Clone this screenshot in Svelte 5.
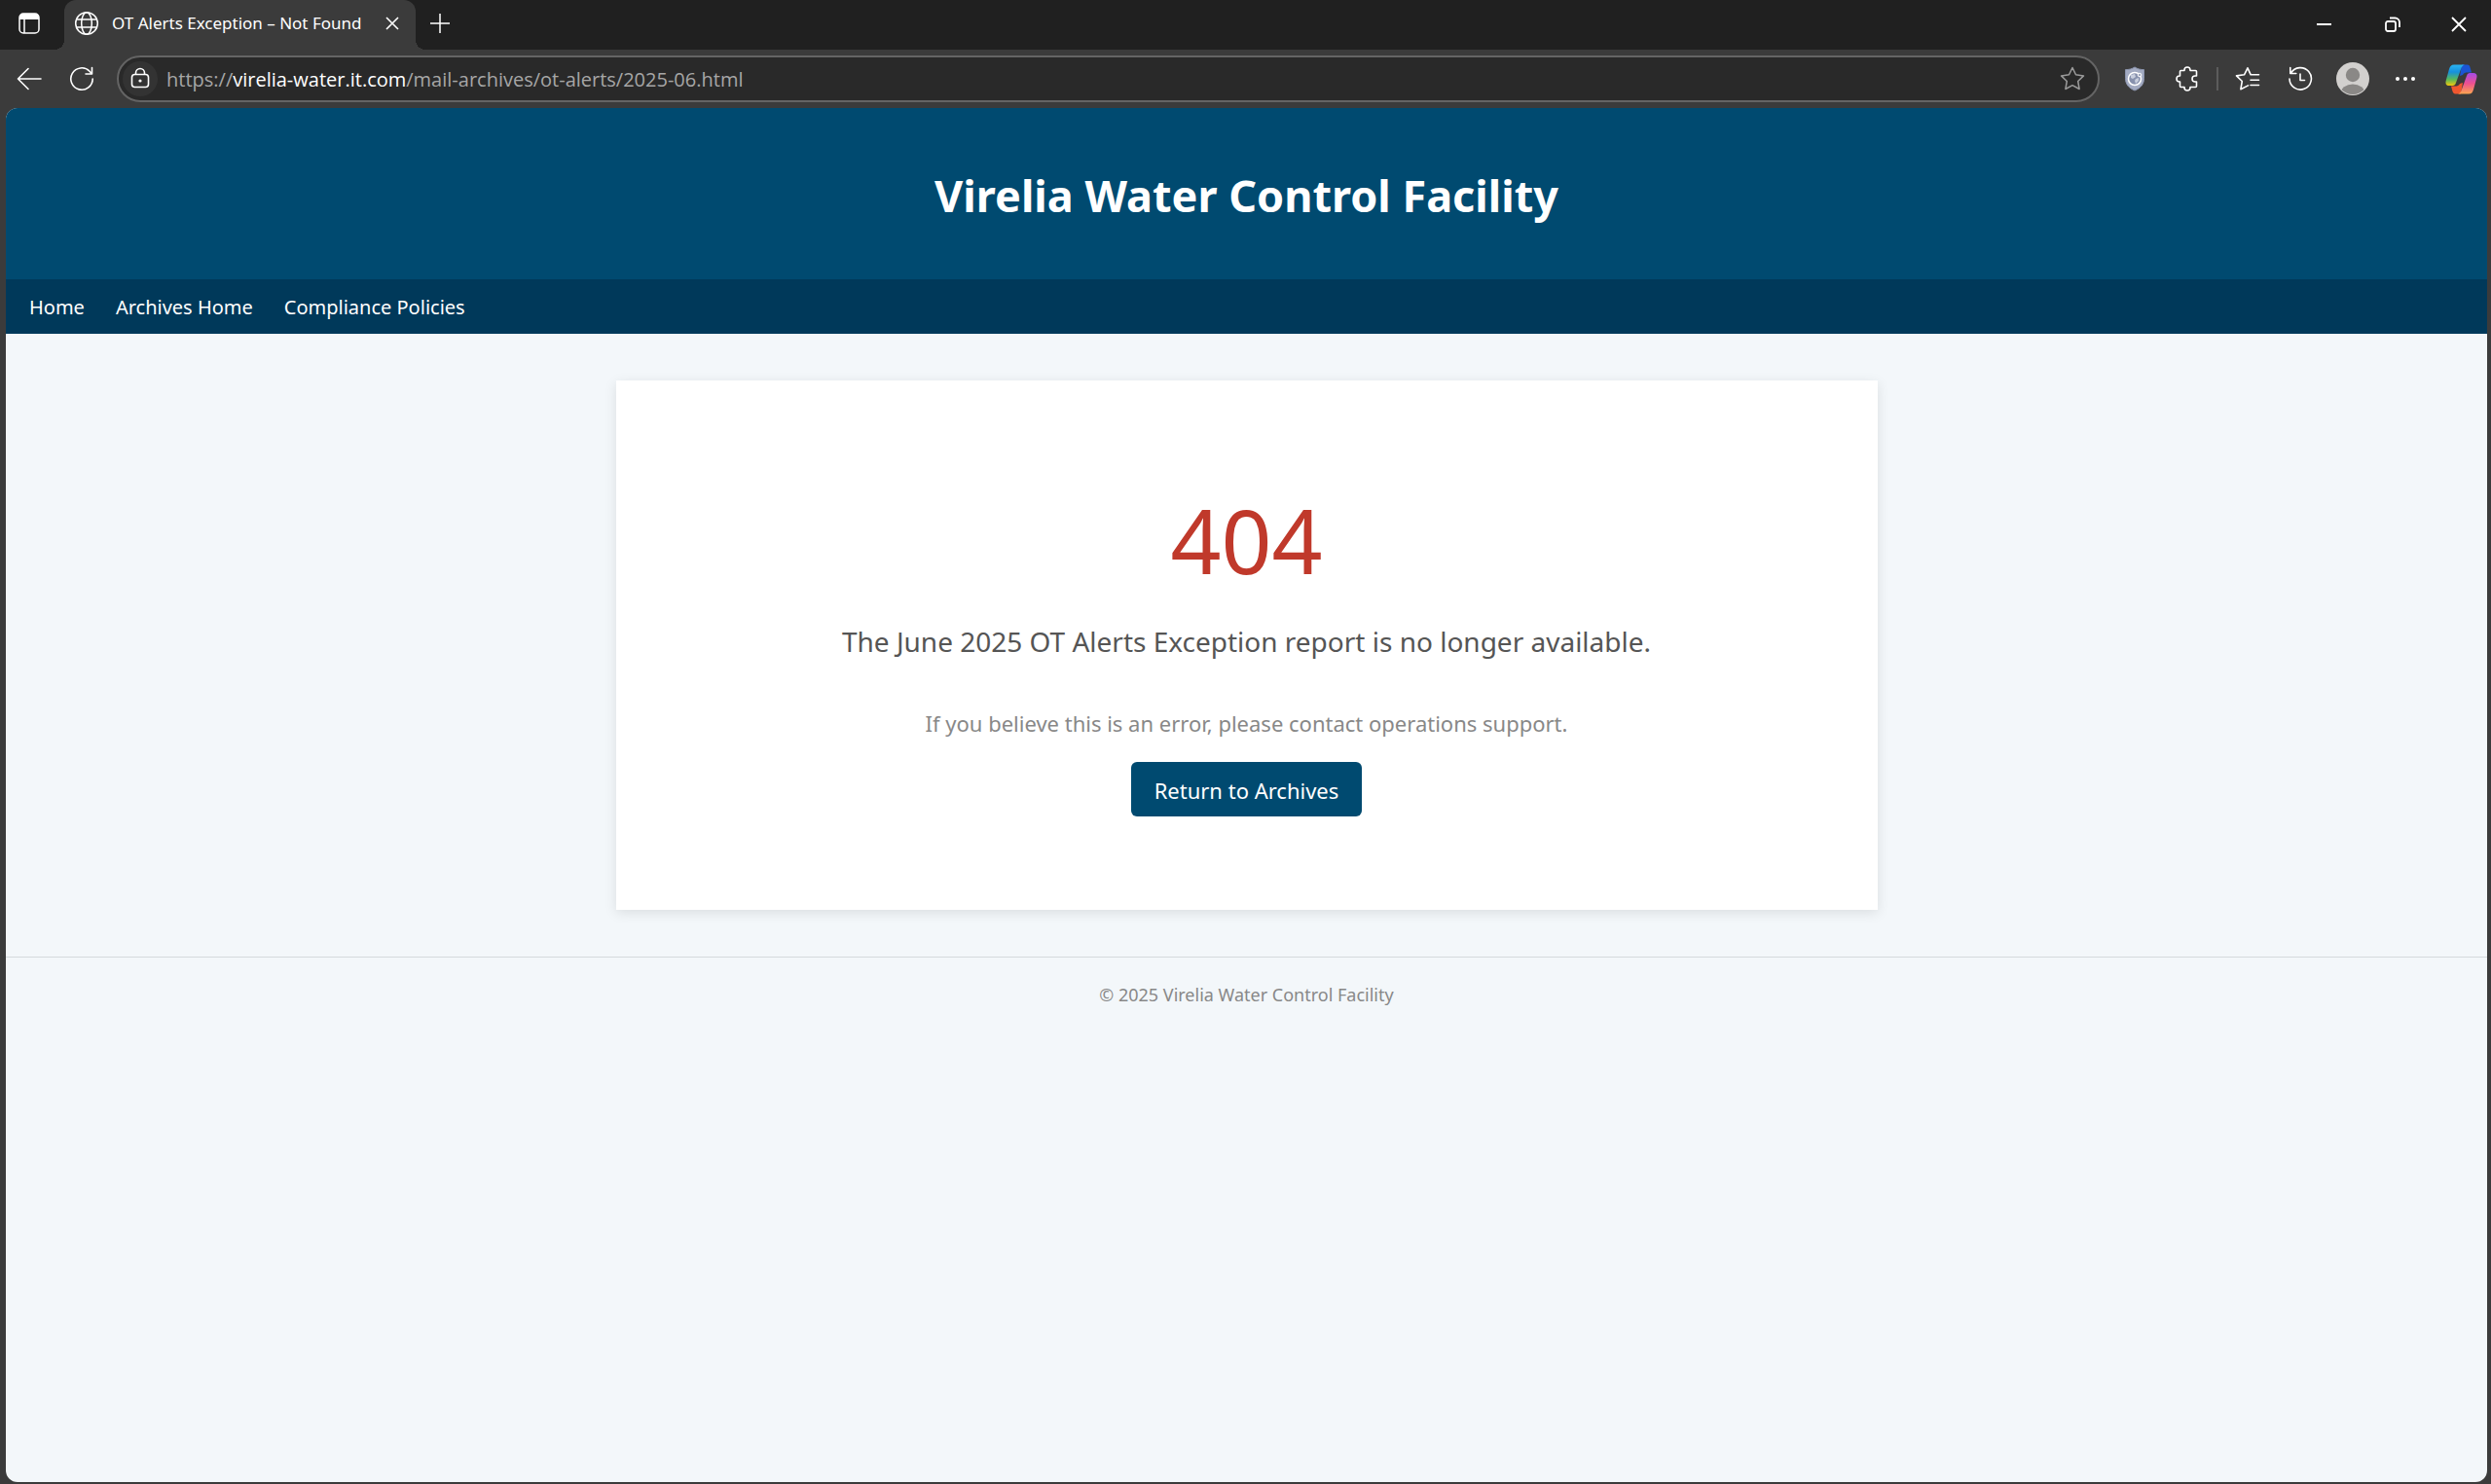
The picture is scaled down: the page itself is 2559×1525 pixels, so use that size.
<script>
  const links = ['Home', 'Archives Home', 'Compliance Policies'];
</script>

<div class="browser">
  <div class="tabstrip">
    <button class="tool side" aria-label="Tab actions">
      <svg width="24" height="24" viewBox="0 0 24 24"><rect x="2" y="2" width="20" height="20" rx="4" fill="none" stroke="#fff" stroke-width="1.5" /><path d="M2 8V6a4 4 0 0 1 4-4h12a4 4 0 0 1 4 4v2z" fill="#fff" /><path d="M7 8v14" stroke="#fff" stroke-width="1.5" /></svg>
    </button>
    <div class="tab">
      <svg width="26" height="26" viewBox="0 0 26 26" fill="none" stroke="#fff" stroke-width="1.5"><circle cx="13" cy="13" r="11.3" /><ellipse cx="13" cy="13" rx="5.3" ry="11.3" /><path d="M3 9h20M3 17h20" /></svg>
      <span class="tabtitle">OT Alerts Exception – Not Found</span>
      <button class="closetab" aria-label="Close tab">
        <svg width="14" height="14" viewBox="0 0 14 14" stroke="#fff" stroke-width="1.6"><path d="M1 1l12 12M13 1L1 13" /></svg>
      </button>
    </div>
    <button class="tool newtab" aria-label="New tab">
      <svg width="22" height="22" viewBox="0 0 22 22" stroke="#fff" stroke-width="1.5"><path d="M11 1v20M1 11h20" /></svg>
    </button>
    <div class="wincontrols">
      <button class="win" aria-label="Minimize"><svg width="16" height="16" viewBox="0 0 16 16"><path d="M0 8h15" stroke="#fff" stroke-width="2" /></svg></button>
      <button class="win" aria-label="Restore"><svg width="18" height="18" viewBox="0 0 18 18" fill="none" stroke="#fff" stroke-width="1.8"><rect x="2" y="6" width="10" height="10" rx="2" /><path d="M6 2.500h5.500a4.500 4.500 0 0 1 4.500 4.500v5" /></svg></button>
      <button class="win" aria-label="Close"><svg width="16" height="16" viewBox="0 0 16 16" stroke="#fff" stroke-width="1.8"><path d="M1 1l14 14M15 1L1 15" /></svg></button>
    </div>
  </div>

  <div class="toolbar">
    <button class="tool" aria-label="Back">
      <svg width="26" height="24" viewBox="0 0 26 24" fill="none" stroke="#fff" stroke-width="1.6" stroke-linecap="round" stroke-linejoin="round"><path d="M12 1.500L1.500 12 12 22.500M1.500 12H25" /></svg>
    </button>
    <button class="tool" aria-label="Refresh">
      <svg width="26" height="26" viewBox="0 0 26 26" fill="none" stroke="#fff" stroke-width="1.6" stroke-linecap="round" stroke-linejoin="round"><path d="M24.200 13A11.200 11.200 0 1 1 21 5.200L23.500 8M23.500 1.500V8H17" /></svg>
    </button>
    <div class="address">
      <button class="lock" aria-label="Site information">
        <svg width="22" height="24" viewBox="0 0 22 24" fill="none" stroke="#fff" stroke-width="1.6"><rect x="2.500" y="7.500" width="17" height="13" rx="3" /><path d="M6.500 7.500V6a4.500 4.500 0 0 1 9 0v1.500" /><circle cx="11" cy="14" r="1.600" fill="#fff" stroke="none" /></svg>
      </button>
      <span class="url">https://<b>virelia-water.it.com</b>/mail-archives/ot-alerts/2025-06.html</span>
      <button class="star" aria-label="Add to favorites">
        <svg width="26" height="26" viewBox="0 0 26 26" fill="none" stroke="#9a9a9a" stroke-width="1.5" stroke-linejoin="round"><path d="M13 1.500l3.500 7.300 8 1.100-5.800 5.600 1.400 8L13 19.700l-7.100 3.800 1.400-8L1.500 9.900l8-1.100z" /></svg>
      </button>
    </div>
    <button class="tool" aria-label="Security extension">
      <svg width="22" height="26" viewBox="0 0 22 26"><path d="M11 1c3 2 6 2.600 9.500 2.600v9c0 6-3.500 10-9.500 12.400C5 22.600 1.500 18.600 1.500 12.600v-9C5 3.600 8 3 11 1z" fill="#a3abc2" stroke="#8c95ae" /><circle cx="11" cy="13" r="6.500" fill="#8791ad" stroke="#fff" stroke-width="1.500" /><path d="M7 9l4-1 1 3-3 2-2-1zM12 13l3-1v3l-3 3-1-3z" fill="#c8cedd" /><circle cx="16" cy="9" r="1.800" fill="#a3abc2" stroke="#fff" /></svg>
    </button>
    <button class="tool" aria-label="Extensions">
      <svg width="24" height="26" viewBox="0 0 24 26" fill="none" stroke="#fff" stroke-width="1.600" stroke-linejoin="round"><path d="M5.500 4.500H9V4a3 3 0 0 1 6 0v.5h5.500a1 1 0 0 1 1 1V10H20a3 3 0 0 0 0 6h1.500v4.500a1 1 0 0 1-1 1H15v.5a3 3 0 0 1-6 0v-.5H5.500a1 1 0 0 1-1-1V16H4a3 3 0 0 1 0-6h.5V5.500a1 1 0 0 1 1-1z" /></svg>
    </button>
    <span class="divider"></span>
    <button class="tool" aria-label="Favorites">
      <svg width="26" height="26" viewBox="0 0 26 26" fill="none" stroke="#fff" stroke-width="1.600" stroke-linejoin="round" stroke-linecap="round"><path d="M24.500 8.800h-8.300L13 1.800 9.500 8.800l-8 1.100 5.800 5.600-1.400 8.200 7.600-3.800M16 14.300h8.500M16 19.500h8.500" /></svg>
    </button>
    <button class="tool" aria-label="History">
      <svg width="26" height="26" viewBox="0 0 26 26" fill="none" stroke="#fff" stroke-width="1.600" stroke-linejoin="round" stroke-linecap="round"><path d="M2 13A11.200 11.200 0 1 0 3.500 7.200M2.800 1.500v6h6M13 8v6.500h4.500" /></svg>
    </button>
    <button class="tool" aria-label="Profile">
      <svg width="34" height="34" viewBox="0 0 34 34"><defs><clipPath id="face"><circle cx="17" cy="17" r="16" /></clipPath></defs><circle cx="17" cy="17" r="17" fill="#d2d0ce" /><circle cx="17" cy="13" r="7.200" fill="#8a8886" /><ellipse cx="17" cy="32" rx="12.500" ry="9.500" fill="#8a8886" clip-path="url(#face)" /></svg>
    </button>
    <button class="tool" aria-label="Settings and more">
      <svg width="22" height="6" viewBox="0 0 22 6" fill="#fff"><circle cx="3" cy="3" r="2" /><circle cx="11" cy="3" r="2" /><circle cx="19" cy="3" r="2" /></svg>
    </button>
    <button class="tool copilot" aria-label="Copilot">
      <svg width="33" height="31" viewBox="0 0 33 31">
        <defs>
          <linearGradient id="cool" x1="0" y1="0" x2="0" y2="1"><stop offset="0" stop-color="#2bb4f2" /><stop offset=".35" stop-color="#1690dc" /><stop offset=".7" stop-color="#58b95a" /><stop offset="1" stop-color="#f3c80c" /></linearGradient>
          <linearGradient id="warm" x1="0" y1="0" x2="0" y2="1"><stop offset="0" stop-color="#fba650" /><stop offset=".5" stop-color="#ee5090" /><stop offset="1" stop-color="#a44be8" /></linearGradient>
        </defs>
        <path d="M17 .5h5.500c2 0 2.600 1.200 3.200 3.200L27 8.500h-4c-2.500 0-4 .5-5 2.500l-3 1z" fill="#1b55d4" />
        <path d="M17 .5h5.500c2 0 2.600 1.200 3.200 3.200L27 8.500h-4c-2.500 0-4 .5-5 2.500l-3 1z" fill="#f0572f" transform="rotate(180 16.500 15.500)" />
        <path d="M9 .5h11c-2 .5-3 2-3.700 4L11 19c-.8 2.300-1.500 3-3.500 3H4C1 22 0 20 .7 17L4 5C5 2 6 .5 9 .5z" fill="url(#cool)" />
        <path d="M9 .5h11c-2 .5-3 2-3.700 4L11 19c-.8 2.300-1.500 3-3.500 3H4C1 22 0 20 .7 17L4 5C5 2 6 .5 9 .5z" fill="url(#warm)" transform="rotate(180 16.500 15.500)" />
      </svg>
    </button>
  </div>

  <div class="page">
    <header><h1>Virelia Water Control Facility</h1></header>
    <nav>
      {#each links as link}<a href="#top">{link}</a>{/each}
    </nav>
    <main>
      <div class="code">404</div>
      <p class="message">The June 2025 OT Alerts Exception report is no longer available.</p>
      <p class="hint">If you believe this is an error, please contact operations support.</p>
      <a class="return" href="#archives">Return to Archives</a>
    </main>
    <footer>© 2025 Virelia Water Control Facility</footer>
  </div>
</div>

<style>
  :global(body) { background: #3b3b3b; }
  .browser {
    min-height: 100vh;
    display: flex;
    flex-direction: column;
    box-sizing: border-box;
    padding-bottom: 2px;
    background: #3b3b3b;
    font-family: 'Noto Sans', 'Open Sans', sans-serif;
  }
  button {
    display: flex;
    align-items: center;
    justify-content: center;
    padding: 0;
    border: 0;
    background: none;
  }
  svg { display: block; flex: none; }
  .tabstrip { display: flex; height: 51px; background: #202020; }
  .tool { width: 54px; height: 48px; flex: none; }
  .side { width: 60px; margin-right: 6px; }
  .tab {
    position: relative;
    display: flex;
    align-items: center;
    width: 361px;
    box-sizing: border-box;
    padding: 0 12px 3px 10px;
    border-radius: 12px 12px 0 0;
    background: #3b3b3b;
    color: #fff;
  }
  .tab::before, .tab::after {
    content: '';
    position: absolute;
    bottom: 0;
    width: 10px;
    height: 10px;
  }
  .tab::before { left: -10px; background: radial-gradient(circle at 0 0, #202020 10px, #3b3b3b 10px); }
  .tab::after { right: -10px; background: radial-gradient(circle at 100% 0, #202020 10px, #3b3b3b 10px); }
  .tabtitle { flex: 1; margin-left: 13px; font-size: 17px; line-height: 24px; white-space: nowrap; }
  .closetab { width: 24px; height: 24px; }
  .newtab { width: 50px; }
  .wincontrols { display: flex; margin-left: auto; }
  .win { width: 70px; height: 50px; }
  .win:last-child { width: 66px; }
  .toolbar { display: flex; align-items: center; height: 60px; padding-left: 3px; }
  .address {
    flex: 1;
    display: flex;
    align-items: center;
    height: 48px;
    box-sizing: border-box;
    margin: 0 9px;
    padding: 0 13px 0 4px;
    border: 2px solid #646464;
    border-radius: 24px;
    background: #292929;
  }
  .lock { width: 36px; height: 36px; border-radius: 50%; background: #333; }
  .url { flex: 1; margin-left: 9px; padding-top: 2px; font-family: 'Open Sans', 'Noto Sans', sans-serif; font-size: 20px; line-height: 30px; color: #a6a6a6; white-space: nowrap; }
  .url b { font-weight: 400; color: #fff; }
  .star { width: 26px; height: 36px; }
  .divider { width: 2px; height: 24px; margin: 0 3px; background: #5c5c5c; }
  .copilot { width: 61px; }
  .page {
    flex: 1;
    margin: 0 4px 0 6px;
    border-radius: 12px;
    overflow: hidden;
    background: #f3f7fa;
  }
  header { padding: 58px 24px 54px; background: #004a70; text-align: center; }
  h1 { margin: 0; font-size: 45px; line-height: 64px; font-weight: 700; color: #fff; }
  nav { display: flex; gap: 32px; padding: 14px 24px 12px; background: #00395a; }
  nav a { font-size: 20px; line-height: 30px; color: #fff; text-decoration: none; }
  main {
    max-width: 1296px;
    box-sizing: border-box;
    margin: 48px auto;
    padding: 96px 24px;
    background: #fff;
    box-shadow: 0 3px 12px rgba(0, 0, 0, 0.1);
    text-align: center;
  }
  .code { font-size: 91px; line-height: 136px; color: #c0392b; }
  .message { margin: 16px 0 48px; font-size: 28px; line-height: 40px; color: #555; }
  .hint { margin: 0 0 24px; font-size: 22px; line-height: 32px; color: #888; }
  .return {
    display: inline-block;
    padding: 13px 24px 11px;
    border-radius: 6px;
    background: #004a70;
    font-size: 22px;
    line-height: 32px;
    color: #fff;
    text-decoration: none;
  }
  footer {
    padding: 24px;
    border-top: 1px solid #d5dadd;
    font-size: 18px;
    line-height: 28px;
    color: #888;
    text-align: center;
  }
</style>
